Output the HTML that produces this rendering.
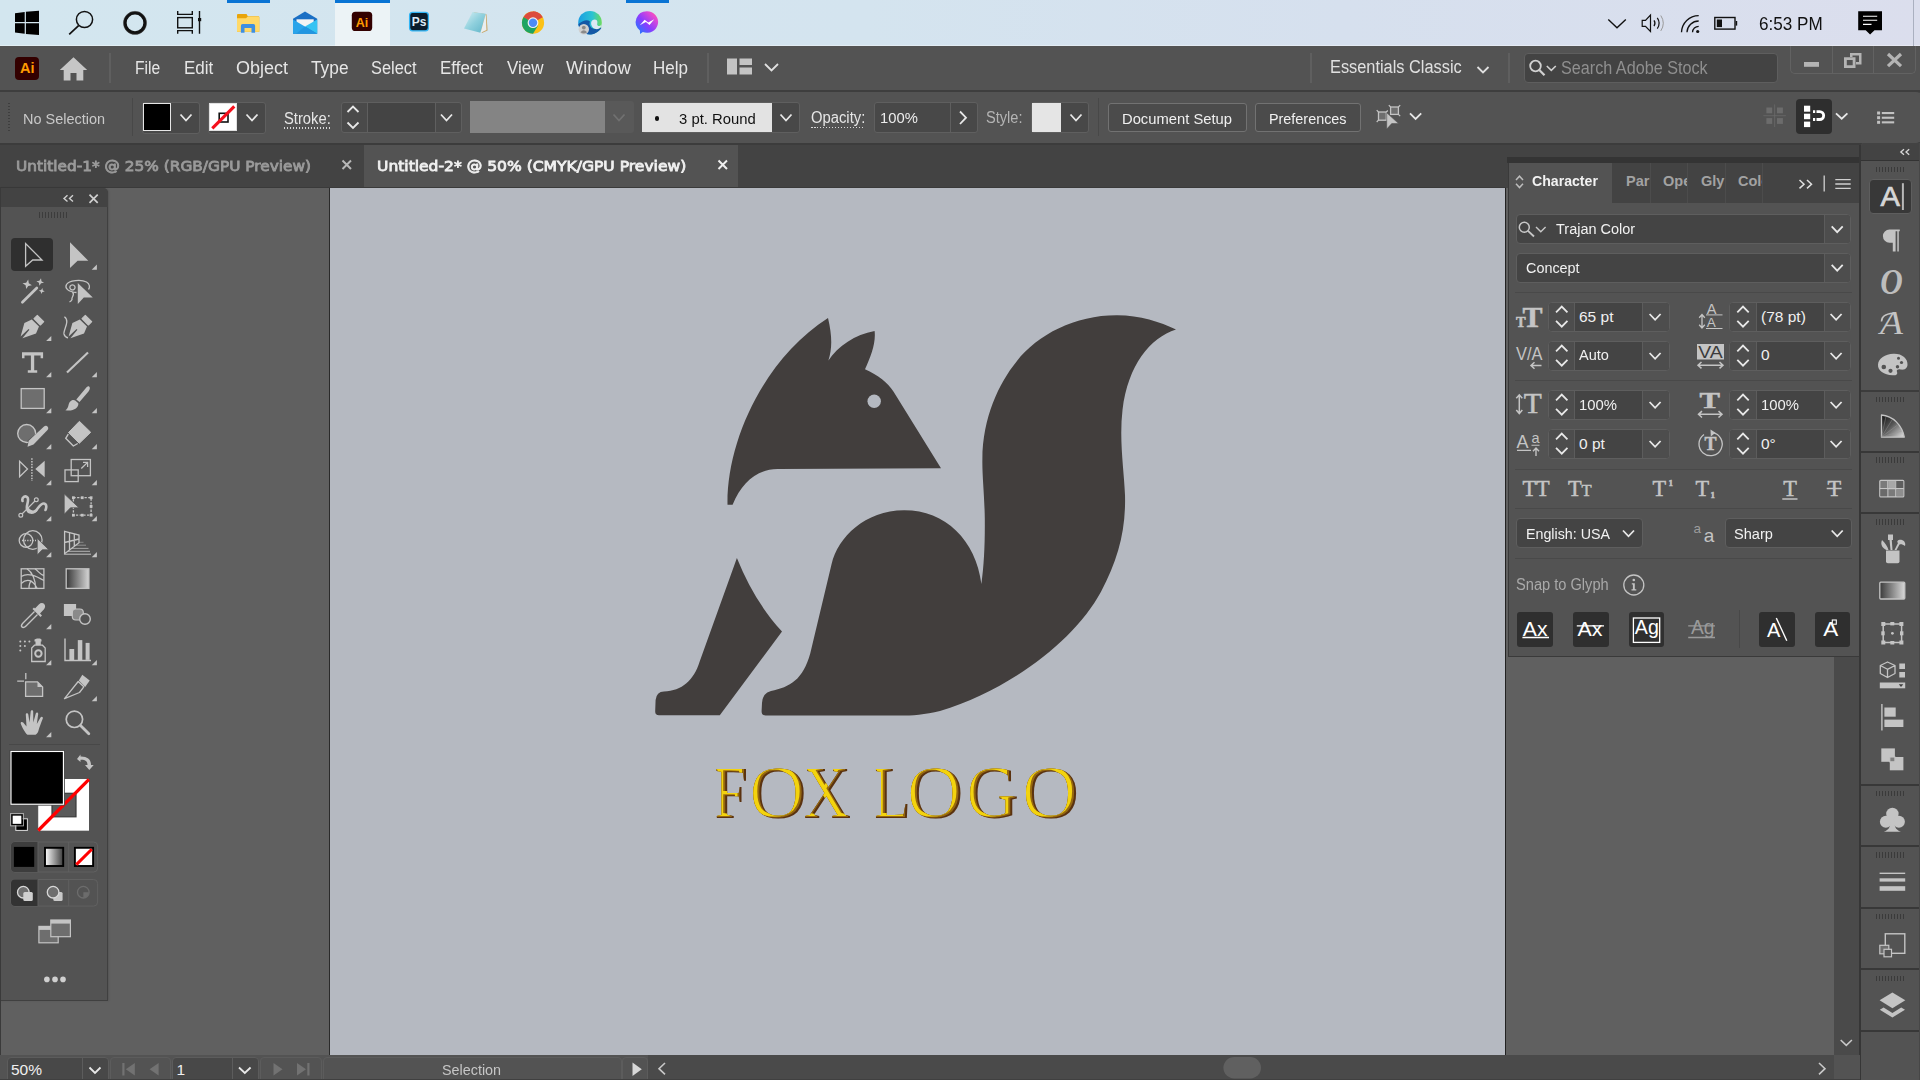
<!DOCTYPE html>
<html><head><meta charset="utf-8"><title>Adobe Illustrator</title>
<style>
*{box-sizing:border-box;margin:0;padding:0}
html,body{width:1920px;height:1080px;overflow:hidden;background:#535353;font-family:"Liberation Sans",sans-serif;color:#dcdcdc}
.a{position:absolute}
.t{position:absolute;white-space:nowrap;line-height:1}
svg{position:absolute;overflow:visible}
#taskbar{left:0;top:0;width:1920px;height:46px;background:#dce8f3}
#menubar{left:0;top:46px;width:1920px;height:45px;background:#535353}
#ctrl{left:0;top:91px;width:1920px;height:53px;background:#535353;border-top:2px solid #454545;border-bottom:2px solid #3f3f3f}
#tabs{left:0;top:144px;width:1920px;height:44px;background:#424242}
#paste{left:0;top:188px;width:1860px;height:868px;background:#606060}
#canvas{left:330px;top:188px;width:1175px;height:867px;background:#b5b9c1}
#status{left:0;top:1056px;width:1860px;height:24px;background:#4a4a4a}
.menu{top:58.500px;font-size:18px;color:#e6e6e6}
.cb{position:absolute;background:#484848;border:1px solid #5f5f5f;border-radius:3px}
</style></head><body>
<div class="a" id="taskbar"></div>
<div class="a" id="menubar"></div>
<div class="a" id="ctrl"></div>
<div class="a" id="tabs"></div>
<div class="a" id="paste"></div>
<div class="a" id="canvas"></div>
<div class="a" id="status"></div>

<div class="a" style="left:0;top:0;width:1920px;height:46px;background:linear-gradient(90deg,#d3e6ef 0%,#d4e4ef 45%,#d6e0ee 70%,#dbdeed 100%)"></div>
<div class="a" style="left:335px;top:0;width:55px;height:46px;background:#ecf3f6"></div><div class="a" style="left:0;top:45px;width:1920px;height:1px;background:rgba(255,255,255,.35)"></div>
<div class="a" style="left:227px;top:0;width:43px;height:3px;background:#0a74d4"></div>
<div class="a" style="left:335px;top:0;width:55px;height:3px;background:#0a74d4"></div>
<div class="a" style="left:626px;top:0;width:43px;height:3px;background:#0a74d4"></div>
<div class="a" style="left:1913px;top:0;width:1px;height:46px;background:#aab0c0"></div>
<svg width="1920" height="46" viewBox="0 0 1920 46" style="left:0;top:0">
<!-- windows -->
<path d="M15 13.2 L24.7 11.9 V22 H15Z M25.9 11.7 L39 10.7 V22 H25.9Z M15 23.2 H24.7 V33.8 L15 32.4Z M25.9 23.2 H39 V35 L25.9 33.9Z" fill="#000"/>
<!-- search -->
<circle cx="84.5" cy="19.5" r="8.1" fill="none" stroke="#111" stroke-width="1.5"/>
<path d="M78.6 25.6 L69.2 34.3" stroke="#111" stroke-width="1.7" fill="none"/>
<!-- cortana -->
<circle cx="135" cy="22.9" r="10" fill="none" stroke="#111" stroke-width="3.3"/>
<circle cx="135" cy="22.9" r="11.6" fill="none" stroke="#555" stroke-width="0.8" opacity=".5"/>
<!-- taskview -->
<g fill="none" stroke="#111" stroke-width="1.4">
<rect x="177.7" y="17.6" width="14.6" height="10.2"/>
<path d="M177.7 11 V14.4 H192.3 V11 M177.7 33.8 V30.6 H192.3 V33.8 M199.5 11 V33.8"/>
</g>
<rect x="198" y="18" width="3.2" height="3.2" fill="#111"/>
<!-- folder -->
<path d="M237 15 q0-1 1-1 h8.5 l1.3 2.2 h10.5 q1 0 1 1 v14.5 h-22.3z" fill="#e9a50a"/>
<path d="M237 18.2 l9-0 l1.8-1.8 h10.5 q1 0 1 1 v14.4 h-22.3z" fill="#ffd968"/>
<path d="M240.9 32.7 v-7 q0-1.6 1.6-1.6 h11 q1.6 0 1.6 1.6 v7 h-3.6 v-4.7 h-7 v4.700z" fill="#3f8fe0"/>
<!-- mail -->
<path d="M293 18.8 L305 11.5 L317.2 18.8 V33.8 H293Z" fill="#1a6fc4"/>
<path d="M296.5 19.3 H313.7 V27 H296.500Z" fill="#f4f4f4"/>
<path d="M293 19.5 L317.2 33.8 H293Z" fill="#29a4ea"/>
<path d="M317.2 19.5 V33.8 L305 26.6Z" fill="#35c3f3"/>
<path d="M305 26.6 L317.2 33.8 H296Z" fill="#1d8bd8" opacity=".55"/>
<!-- Ai -->
<rect x="351.8" y="11.7" width="20.4" height="19.4" rx="3.6" fill="#330000"/>
<text x="362" y="26.6" font-family="Liberation Sans,sans-serif" font-weight="700" font-size="12.5" fill="#ff9a00" text-anchor="middle">Ai</text>
<!-- Ps -->
<rect x="409.6" y="12.4" width="18.8" height="18.4" rx="3" fill="#0b1c2c" stroke="#31b5f5" stroke-width="1.3"/>
<text x="419" y="26.3" font-family="Liberation Sans,sans-serif" font-weight="700" font-size="12" fill="#dcebf7" text-anchor="middle">Ps</text>
<!-- notepad -->
<defs>
<linearGradient id="np" x1="0" y1="0" x2="1" y2="1"><stop offset="0" stop-color="#d8f0f4"/><stop offset=".5" stop-color="#8fd0dd"/><stop offset="1" stop-color="#5fb4c8"/></linearGradient>
<linearGradient id="ms" x1="0" y1="1" x2="1" y2="0"><stop offset="0" stop-color="#0a86ff"/><stop offset=".45" stop-color="#8a3dff"/><stop offset=".8" stop-color="#e84ad0"/><stop offset="1" stop-color="#ff6a6a"/></linearGradient>
<linearGradient id="ed" x1="0" y1="0" x2="1" y2="0"><stop offset="0" stop-color="#1b9de2"/><stop offset=".6" stop-color="#2cc3d2"/><stop offset="1" stop-color="#6ddc5c"/></linearGradient>
</defs>
<path d="M473.500 12.3 L486.5 14.2 L487.6 30.500 L482 33 Z" fill="#c9a86a"/>
<path d="M472.500 12 L485.800 13.8 L480.500 32.8 L464 28.5Z" fill="url(#np)"/>
<path d="M485.800 13.8 L486.400 30 L480.500 32.8Z" fill="#e9eef0"/>
<!-- chrome -->
<circle cx="533" cy="22.700" r="11.100" fill="#fbc116"/>
<path d="M533 22.700 L523.400 17.150 A11.100 11.100 0 0 1 542.600 17.150Z" fill="#dc4b3e"/>
<path d="M533 11.600 A11.100 11.100 0 0 1 542.600 17.150 L533 17.150Z" fill="#dc4b3e"/>
<path d="M523.400 17.150 A11.100 11.100 0 0 0 533 33.800 L538 25.500 L533 22.700Z" fill="#1da462"/>
<path d="M523.400 17.150 L528.200 25.500 L533 22.700Z" fill="#1da462"/>
<circle cx="533" cy="22.700" r="5.400" fill="#f1f1f1"/>
<circle cx="533" cy="22.700" r="4.200" fill="#4c8bf5"/>
<!-- edge -->
<circle cx="590" cy="22.700" r="11.800" fill="url(#ed)"/>
<path d="M578.300 24 A11.800 11.800 0 0 0 597 32.200 Q601 29.500 601.500 27.500 Q596 30.500 591.500 27.800 Q588.500 25 590 21.500 Q586 18 578.300 24Z" fill="#1458a6"/>
<path d="M590 21.500 Q591.500 18.500 595 19.300 Q598.500 20.500 597 24.500 Q595.500 27.200 601.600 25 Q602.200 21 600 18 Q595 13 588 15.500 Q582 18 580.500 23 Q585 18.500 590 21.500Z" fill="#dce8f3" opacity="0"/>
<path d="M591.200 24.500 Q590.500 20 594.500 19.500 Q598 19.800 597.300 23.200 Q596.500 26 599.500 26 Q601.500 25.500 601.700 24 Q601.500 28 597 29.200 Q592.500 29 591.200 24.500Z" fill="#dce8f3"/>
<circle cx="583.800" cy="29.300" r="5.200" fill="#d0d0d0"/>
<circle cx="583.800" cy="27.600" r="1.900" fill="#8a8a8a"/>
<path d="M580.500 32.300 q3.300-4.200 6.600 0 q-3.300 2.600-6.600 0z" fill="#8a8a8a"/>
<!-- messenger -->
<path d="M647 11.200 a11.100 10.800 0 1 1-4.200 20.800 l-2.700 2 l-.2-3.600 A11.100 10.800 0 0 1 647 11.200z" fill="url(#ms)"/>
<path d="M639.800 25.300 L644.600 19.700 L648.200 22.500 L654.300 19.300 L649.500 24.900 L645.900 22.100Z" fill="#fff"/>
<!-- tray -->
<g fill="none" stroke="#111" stroke-width="1.4">
<path d="M1608.300 19.600 L1617 27.800 L1625.800 19.600"/>
<path d="M1642.200 20.300 H1645.500 L1650.500 15 V31.500 L1645.500 26.300 H1642.200Z" stroke-width="1.200"/>
<path d="M1654 20.300 q2 2.900 0 5.800 M1657.300 17.800 q3.700 5.400 0 10.800" stroke-width="1.200"/>
<path d="M1660.800 15.500 q5 7.700 0 15.400" stroke-width="1" stroke="#999"/>
<path d="M1681.500 32.300 A17.200 17.200 0 0 1 1698.700 15.600 M1687 32.300 A11.700 11.700 0 0 1 1698.700 21 M1692.500 32.300 A6.200 6.200 0 0 1 1698.700 26.300" stroke-width="1.300"/>
<rect x="1714.800" y="17.500" width="20.200" height="11.600" stroke-width="1.400"/>
</g>
<circle cx="1697.700" cy="31.500" r="1.600" fill="#111"/>
<rect x="1716.800" y="19.500" width="5.200" height="7.600" fill="#111"/>
<rect x="1735.700" y="21" width="1.500" height="4.600" fill="#111"/>
<path d="M1858.200 11.200 H1882 V30.300 H1874.500 L1870.100 34.500 L1865.700 30.300 H1858.200Z" fill="#000"/>
<path d="M1863 16.200 H1877.200 M1863 20.300 H1877.200 M1863 24.400 H1871.500" stroke="#fff" stroke-width="1.100" fill="none"/>
</svg>
<div class="t" id="time" style="left:1759.300px;top:15.300px;font-size:18.500px;color:#111;transform:scaleX(0.9244);transform-origin:0 0">6:53 PM</div>


<div class="a" style="left:0;top:90px;width:1920px;height:2px;background:#3e3e3e"></div>
<div class="a" style="left:15px;top:57px;width:24px;height:23px;border-radius:4px;background:#330000"></div>
<div class="t" style="left:20px;top:61px;font-size:14.500px;font-weight:700;color:#ff9a00">Ai</div>
<svg width="30" height="26" viewBox="0 0 30 26" style="left:59px;top:56px"><path d="M14.500 1.200 L28.200 14 H24.300 V24.500 H17.500 V17 H11.500 V24.500 H4.700 V14 H0.800Z" fill="#c6c6c6"/></svg>
<div class="a" style="left:109px;top:53px;width:2px;height:30px;background:#5f5f5f"></div>
<div class="t menu" id="m1" style="left:134.500px;transform:scaleX(0.8685);transform-origin:0 0">File</div>
<div class="t menu" id="m2" style="left:183.500px;transform:scaleX(0.9442);transform-origin:0 0">Edit</div>
<div class="t menu" id="m3" style="left:236px;transform:scaleX(0.9994);transform-origin:0 0">Object</div>
<div class="t menu" id="m4" style="left:311px;transform:scaleX(0.9608);transform-origin:0 0">Type</div>
<div class="t menu" id="m5" style="left:371px;transform:scaleX(0.9094);transform-origin:0 0">Select</div>
<div class="t menu" id="m6" style="left:440px;transform:scaleX(0.9409);transform-origin:0 0">Effect</div>
<div class="t menu" id="m7" style="left:507px;transform:scaleX(0.9431);transform-origin:0 0">View</div>
<div class="t menu" id="m8" style="left:566px;transform:scaleX(1.0120);transform-origin:0 0">Window</div>
<div class="t menu" id="m9" style="left:653px;transform:scaleX(0.9451);transform-origin:0 0">Help</div>
<div class="a" style="left:707px;top:53px;width:2px;height:30px;background:#5f5f5f"></div>
<svg width="60" height="20" viewBox="0 0 60 20" style="left:726px;top:57px"><path d="M1 1.500 H11 V17.500 H1Z M13.500 1.500 H26 V8 H13.500Z M13.500 10.500 H26 V17.500 H13.500Z" fill="#c4c4c4"/><path d="M39 7 l6.5 6.5 l6.5 -6.5" fill="none" stroke="#e0e0e0" stroke-width="1.8"/></svg>
<div class="a" style="left:1310px;top:53px;width:2px;height:30px;background:#5f5f5f"></div>
<div class="t" id="ess" style="left:1330px;top:58px;font-size:18px;color:#e0e0e0;transform:scaleX(0.9080);transform-origin:0 0">Essentials Classic</div>
<svg width="14" height="10" viewBox="0 0 14 10" style="left:1476px;top:65px"><path d="M1.5 2 l5.5 5.5 l5.5 -5.5" fill="none" stroke="#e0e0e0" stroke-width="1.8"/></svg>
<div class="a" style="left:1508px;top:53px;width:2px;height:30px;background:#5f5f5f"></div>
<div class="a" style="left:1524px;top:52.500px;width:254px;height:30px;border-radius:4px;background:#434343;border:1px solid #5e5e5e"></div>
<svg width="30" height="20" viewBox="0 0 30 20" style="left:1528px;top:58px"><circle cx="7.500" cy="8" r="5.300" fill="none" stroke="#d0d0d0" stroke-width="1.800"/><path d="M11.300 12 L16.500 17.300" stroke="#d0d0d0" stroke-width="2.200"/><path d="M18.800 8 l4.500 4.300 l4.500-4.300" fill="none" stroke="#d0d0d0" stroke-width="1.600"/></svg>
<div class="t" id="sas" style="left:1561px;top:60px;font-size:17.500px;color:#8f8f8f;transform:scaleX(0.9245);transform-origin:0 0">Search Adobe Stock</div>
<div class="a" style="left:1790px;top:46px;width:125.500px;height:28px;border:1px solid #626262;border-top:none;border-radius:0 0 5px 5px"></div>
<div class="a" style="left:1832px;top:46px;width:1px;height:28px;background:#626262"></div>
<div class="a" style="left:1873px;top:46px;width:1px;height:28px;background:#626262"></div>
<svg width="126" height="28" viewBox="0 0 126 28" style="left:1790px;top:46px"><rect x="14" y="16" width="15" height="4.800" fill="#b4b4b4"/>
<path d="M60 7 H71.500 V18.500 H66 V16 H69 V9.500 H62.500 V11 H60Z" fill="#b4b4b4"/><path d="M54 11.200 H65.500 V22 H54Z M56.800 14 V19.300 H62.700 V14Z" fill="#b4b4b4" fill-rule="evenodd"/>
<path d="M98 8 L111 20.200 M111 8 L98 20.200" stroke="#b4b4b4" stroke-width="3.200"/></svg>


<div class="a" style="left:0;top:92px;width:1920px;height:51px;background:#535353;border-radius:0 4px 4px 0"></div>
<div class="a" style="left:0;top:143px;width:1920px;height:2px;background:#3c3c3c"></div>
<div class="a" style="left:8px;top:103px;width:2px;height:29px;background:repeating-linear-gradient(180deg,#3e3e3e 0 1px,transparent 1px 3px)"></div>
<div class="t" id="nosel" style="left:22.500px;top:110.500px;font-size:15.500px;color:#c9c9c9;transform:scaleX(0.9330);transform-origin:0 0">No Selection</div>
<div class="a" style="left:132px;top:98px;width:1px;height:38px;background:#484848"></div>
<div class="cb" style="left:142px;top:101.500px;width:57.500px;height:32px"></div>
<div class="a" style="left:143.200px;top:103px;width:27.800px;height:28.300px;background:#000;border:1.800px solid #e6e6e6"></div>
<div class="cb" style="left:208px;top:101.500px;width:57.500px;height:32px"></div>
<div class="a" style="left:209px;top:103px;width:28px;height:28.300px;background:#fff;border:1px solid #e0e0e0"></div>
<svg width="30" height="30" viewBox="0 0 30 30" style="left:209px;top:103px"><rect x="10.200" y="10.300" width="8.800" height="8.700" fill="none" stroke="#111" stroke-width="1.600"/><path d="M3.300 25.300 L25.300 3.300" stroke="#f5101c" stroke-width="3.100"/></svg>
<svg width="300" height="40" viewBox="0 0 300 40" style="left:170px;top:100px"><path d="M10.5 14.5 l5.5 6 l5.5 -6" fill="none" stroke="#e8e8e8" stroke-width="1.8"/><path d="M76.5 14.5 l5.5 6 l5.5 -6" fill="none" stroke="#e8e8e8" stroke-width="1.8"/></svg>
<div class="t" id="stroke" style="left:283.500px;top:110.500px;font-size:16px;color:#e6e6e6;transform:scaleX(0.9223);transform-origin:0 0">Stroke:</div>
<div class="a" style="left:284px;top:127px;width:46.500px;height:1.500px;background:repeating-linear-gradient(90deg,#d8d8d8 0 1.500px,transparent 1.500px 3px)"></div>
<div class="cb" style="left:340.500px;top:102px;width:121px;height:31px;background:#4a4a4a"></div><div class="a" style="left:368px;top:103px;width:67px;height:29px;background:#444"></div>
<div class="a" style="left:367px;top:103px;width:1px;height:29px;background:#5f5f5f"></div>
<div class="a" style="left:435px;top:103px;width:1px;height:29px;background:#5f5f5f"></div>
<svg width="130" height="40" viewBox="0 0 130 40" style="left:340px;top:100px"><path d="M7.5 12 l5.5 -5.5 l5.5 5.5" fill="none" stroke="#e8e8e8" stroke-width="1.8"/><path d="M7.5 22.5 l5.5 5.5 l5.5 -5.5" fill="none" stroke="#e8e8e8" stroke-width="1.8"/><path d="M101 14.5 l5.5 6 l5.5 -6" fill="none" stroke="#e8e8e8" stroke-width="1.8"/></svg>
<div class="a" style="left:470px;top:101px;width:135px;height:32px;background:#848484"></div>
<div class="a" style="left:605px;top:101px;width:29px;height:32px;background:#595959;border-radius:0 3px 3px 0"></div>
<svg width="20" height="12" viewBox="0 0 20 12" style="left:612px;top:112px"><path d="M1.5 2.5 l5.5 6 l5.5 -6" fill="none" stroke="#717171" stroke-width="1.8"/></svg>
<div class="cb" style="left:642px;top:102px;width:158px;height:31px"></div>
<div class="a" style="left:642px;top:103px;width:129.500px;height:29px;background:#e3e3e3"></div>
<div class="a" style="left:654.500px;top:116px;width:4.500px;height:4.500px;border-radius:50%;background:#111"></div>
<div class="t" id="ptr" style="left:678.500px;top:110.500px;font-size:15.500px;color:#111;transform:scaleX(0.9575);transform-origin:0 0">3 pt. Round</div>
<svg width="20" height="12" viewBox="0 0 20 12" style="left:778.500px;top:112px"><path d="M1.5 2.5 l5.5 6 l5.5 -6" fill="none" stroke="#e8e8e8" stroke-width="1.8"/></svg>
<div class="t" id="opac" style="left:810.500px;top:109.500px;font-size:16px;color:#e6e6e6;transform:scaleX(0.9244);transform-origin:0 0">Opacity:</div>
<div class="a" style="left:811px;top:126.500px;width:54px;height:1.500px;background:repeating-linear-gradient(90deg,#d8d8d8 0 1.500px,transparent 1.500px 3px)"></div>
<div class="cb" style="left:874px;top:102px;width:104px;height:31px"></div>
<div class="a" style="left:950px;top:103px;width:1px;height:29px;background:#5f5f5f"></div>
<div class="t" id="o100" style="left:879.500px;top:110px;font-size:15.500px;color:#ececec;transform:scaleX(0.9532);transform-origin:0 0">100%</div>
<svg width="12" height="16" viewBox="0 0 12 16" style="left:958px;top:110px"><path d="M2 1.500 L8 7.700 L2 14" fill="none" stroke="#e8e8e8" stroke-width="1.800"/></svg>
<div class="t" id="style" style="left:985.500px;top:109.500px;font-size:16px;color:#b4b4b4;transform:scaleX(0.9121);transform-origin:0 0">Style:</div>
<div class="cb" style="left:1031px;top:102px;width:58px;height:31px"></div>
<div class="a" style="left:1032px;top:103px;width:29px;height:29px;background:#e5e5e5"></div>
<svg width="20" height="12" viewBox="0 0 20 12" style="left:1068.500px;top:112px"><path d="M1.5 2.5 l5.5 6 l5.5 -6" fill="none" stroke="#e8e8e8" stroke-width="1.8"/></svg>
<div class="a" style="left:1098px;top:98px;width:1px;height:38px;background:#484848"></div>
<div class="a" style="left:1107.500px;top:103px;width:139.500px;height:28.500px;border:1px solid #727272;border-radius:3px;background:#4b4b4b"></div>
<div class="t" id="docs" style="left:1122px;top:110.500px;font-size:15.500px;color:#f0f0f0;transform:scaleX(0.9526);transform-origin:0 0">Document Setup</div>
<div class="a" style="left:1254.500px;top:103px;width:106.500px;height:28.500px;border:1px solid #727272;border-radius:3px;background:#4b4b4b"></div>
<div class="t" id="prefs" style="left:1268.500px;top:110.500px;font-size:15.500px;color:#f0f0f0;transform:scaleX(0.9273);transform-origin:0 0">Preferences</div>
<svg width="50" height="30" viewBox="0 0 50 30" style="left:1375px;top:102px">
<g fill="#6e6e6e" stroke="#c4c4c4" stroke-width="1.300"><rect x="3.500" y="10" width="7.800" height="8.200"/><rect x="15.600" y="5" width="7.800" height="7.400"/></g>
<path d="M3.500 10 l-1.800 -1.800 M3.500 18.200 l-1.800 1.800 M11.300 10 l1.500 -1.500 M15.600 5 l-1.800 -1.800 M23.400 5 l1.800 -1.800 M23.400 12.400 l1.800 1.800" stroke="#c4c4c4" stroke-width="1.200"/>
<path d="M11.700 10.700 V27.100 L16.700 21.600 H23.600Z" fill="#c4c4c4" stroke="#535353" stroke-width="0.600"/><path d="M35 11.300 l5.600 5.600 l5.600 -5.600" fill="none" stroke="#e8e8e8" stroke-width="1.800"/></svg>
<svg width="160" height="40" viewBox="1760 96 160 40" style="left:1760px;top:96px">
<g fill="#6c6c6c"><rect x="1766.400" y="107.500" width="5.800" height="5.800"/><rect x="1777" y="107.500" width="5.900" height="5.800"/><rect x="1766.400" y="118.100" width="5.800" height="5.800"/><rect x="1777" y="118.100" width="5.900" height="5.800"/><rect x="1774.100" y="104.400" width="1" height="22.600" opacity=".7"/><rect x="1763.300" y="115.200" width="22.600" height="1" opacity=".7"/></g>
<rect x="1796" y="99" width="36" height="35" rx="4" fill="#2e2e2e"/>
<g fill="#fff"><rect x="1804" y="105.700" width="6.200" height="6"/><rect x="1804" y="113.700" width="6.200" height="5.500"/><rect x="1804" y="121.600" width="6.200" height="5.500"/>
<path d="M1813 110.200 H1819.700 a5.400 5.400 0 0 1 0 10.800 H1813 V118.100 H1819.700 a2.500 2.500 0 0 0 0 -5 H1813Z"/></g>
<rect x="1815.200" y="109.500" width="1.300" height="12" fill="#2e2e2e"/>
<path d="M1836 113.300 l5.700 5.400 l5.700 -5.400" fill="none" stroke="#e8e8e8" stroke-width="1.800"/>
<g fill="#c2c2c2"><rect x="1877.100" y="111.500" width="3" height="3"/><rect x="1877.100" y="116.200" width="3" height="3"/><rect x="1877.100" y="120.800" width="3" height="3"/><rect x="1881.800" y="112" width="12.400" height="2.100"/><rect x="1881.800" y="116.700" width="12.400" height="2.100"/><rect x="1881.800" y="121.300" width="12.400" height="2.100"/></g>
</svg>


<div class="a" style="left:0;top:145px;width:1920px;height:43px;background:#434343"></div>
<div class="a" style="left:0;top:145px;width:362.500px;height:42px;background:#434343"></div>
<div class="a" style="left:363.500px;top:145px;width:374.500px;height:42px;background:#535353"></div>
<div class="a" style="left:0;top:186.500px;width:1506px;height:1.500px;background:#3a3a3a"></div>
<div class="t" id="tab1" style="left:16px;top:158.800px;font-family:'DejaVu Sans',sans-serif;font-weight:400;-webkit-text-stroke:0.800px;font-size:14px;color:#9a9a9a;transform:scaleX(1.0961);transform-origin:0 0">Untitled-1* @ 25% (RGB/GPU Preview)</div>
<div class="t" id="tab2" style="left:377px;top:158.800px;font-family:'DejaVu Sans',sans-serif;font-weight:400;-webkit-text-stroke:0.800px;font-size:14px;color:#f0f0f0;transform:scaleX(1.1103);transform-origin:0 0">Untitled-2* @ 50% (CMYK/GPU Preview)</div>
<svg width="12" height="12" viewBox="0 0 12 12" style="left:341px;top:159px"><path d="M1.500 1.500 L10 10 M10 1.500 L1.500 10" stroke="#b8b8b8" stroke-width="2"/></svg>
<svg width="12" height="12" viewBox="0 0 12 12" style="left:716.500px;top:159px"><path d="M1.500 1.500 L10 10 M10 1.500 L1.500 10" stroke="#f0f0f0" stroke-width="2"/></svg>


<div class="a" style="left:0;top:188px;width:108px;height:813px;background:#535353;border-radius:0 5px 0 0;border-right:1px solid #404040;border-bottom:1px solid #404040;box-shadow:1px 0 2px rgba(0,0,0,.12)"></div>
<div class="a" style="left:0;top:188px;width:107.500px;height:19px;background:#434343;border-radius:0 5px 0 0"></div>
<div class="a" style="left:0;top:188px;width:1px;height:892px;background:#3a3a3a"></div>
<div class="a" style="left:39px;top:212px;width:29px;height:6px;background:repeating-linear-gradient(90deg,#3c3c3c 0 1px,transparent 1px 3px)"></div>
<div class="a" style="left:11px;top:238px;width:42px;height:33px;border-radius:4px;background:#2f2f2f"></div>
<div class="a" style="left:9px;top:744px;width:91px;height:1px;background:#484848"></div>
<svg width="110" height="812" viewBox="0 188 110 812" style="left:0;top:188px">
<path d="M67.500 195.200 L64 198.400 L67.500 201.600 M73 195.200 L69.500 198.400 L73 201.600" fill="none" stroke="#d0d0d0" stroke-width="1.400"/>
<path d="M89.500 194.600 L97.700 202.800 M97.700 194.600 L89.500 202.800" stroke="#d0d0d0" stroke-width="1.700"/>
<!-- selection -->
<path d="M25.600 243.500 V266.300 L32.700 260 H42 Z" fill="none" stroke="#c4c4c4" stroke-width="1.300" stroke-linejoin="miter"/>
<path d="M70 242.300 V268 L77.600 260.700 H88.300Z" fill="#c4c4c4"/><path d="M96.9 269.8 L96.9 264.6 L91.7 269.8Z" fill="#c4c4c4"/>
<!-- wand -->
<path d="M22.400 302.200 L36.800 288" stroke="#c4c4c4" stroke-width="2.700" stroke-linecap="round"/>
<path d="M27.2 279.5 L28.544 282.956 L32.0 284.3 L28.544 285.644 L27.2 289.1 L25.855999999999998 285.644 L22.4 284.3 L25.855999999999998 282.956Z" fill="#c4c4c4" transform="rotate(12 27.2 284.3)"/><path d="M40.2 278.1 L41.292 280.908 L44.1 282 L41.292 283.092 L40.2 285.9 L39.108000000000004 283.092 L36.300000000000004 282 L39.108000000000004 280.908Z" fill="#c4c4c4" transform="rotate(12 40.2 282)"/><path d="M41.8 288 L42.64 290.16 L44.8 291 L42.64 291.84 L41.8 294 L40.959999999999994 291.84 L38.8 291 L40.959999999999994 290.16Z" fill="#c4c4c4" transform="rotate(12 41.8 291)"/>
<!-- lasso -->
<path d="M77.800 283.100 V303.900 L83.800 297.500 H92.800Z" fill="#c4c4c4"/>
<path d="M76.500 292.500 C68 292 64.500 288 66.500 284.500 C69 280.300 81 279 86.500 282 C90 284 90 287.500 88.500 289.500" fill="none" stroke="#c4c4c4" stroke-width="1.300"/>
<path d="M72.500 290 a2.600 2.600 0 1 0 -0.100 0 M72.500 292 c3 3 -1.500 5 -0.500 7.500 c-0.500 1.500 -1.500 2 -2.500 2.500" fill="none" stroke="#c4c4c4" stroke-width="1.300"/>
<!-- pen -->
<g transform="translate(0,0)"><path d="M20.600 336.600 L24.400 323 L31.800 319.600 L39 326.600 L36 333.400 L22.400 338.200 L29.400 329.800 L28.600 329Z" fill="#c4c4c4"/>
<path d="M34 318.700 L37.300 315.400 L43.700 321.700 L40.400 325Z" fill="#c4c4c4" stroke="#c4c4c4" stroke-width="1.100" stroke-linejoin="round"/></g><path d="M51.3 341.1 L51.3 335.90000000000003 L46.099999999999994 341.1Z" fill="#c4c4c4"/>
<g transform="translate(48,0)"><path d="M20.600 336.600 L24.400 323 L31.800 319.600 L39 326.600 L36 333.400 L22.400 338.200 L29.400 329.800 L28.600 329Z" fill="#c4c4c4"/>
<path d="M34 318.700 L37.300 315.400 L43.700 321.700 L40.400 325Z" fill="#c4c4c4" stroke="#c4c4c4" stroke-width="1.100" stroke-linejoin="round"/></g>
<path d="M64.400 316.700 C70.500 321 63 330 64 334 C65 337.500 67 337.600 68 337.800" fill="none" stroke="#c4c4c4" stroke-width="1.300"/>
<!-- type -->
<path d="M22 352.200 H43.100 V358.300 H40.600 V355.400 H34.200 V370.200 H37.200 V372.800 H27.800 V370.200 H30.900 V355.400 H24.500 V358.300 H22Z" fill="#c4c4c4"/><path d="M51.3 377.2 L51.3 372.0 L46.099999999999994 377.2Z" fill="#c4c4c4"/>
<path d="M67 372.400 L88 352.400" stroke="#c4c4c4" stroke-width="2.100"/><path d="M96.9 377.2 L96.9 372.0 L91.7 377.2Z" fill="#c4c4c4"/>
<!-- rect -->
<rect x="21.200" y="388.600" width="23" height="19.800" fill="#6e6e6e" stroke="#c4c4c4" stroke-width="1.300"/><path d="M51.3 413.3 L51.3 408.1 L46.099999999999994 413.3Z" fill="#c4c4c4"/>
<!-- brush -->
<path d="M88.900 386.300 C90.500 387.500 90 389.500 88.500 391.500 L79.500 402 L76.300 399.400 L85.500 388.500 C87 386.700 88 385.800 88.900 386.300Z" fill="#c4c4c4"/>
<path d="M75.200 400.500 L78.300 403.200 C79 408 73 411.500 65.400 410.200 C69.500 408 67.500 402.500 71.500 400.500 C73 399.800 74.200 399.900 75.200 400.500Z" fill="#c4c4c4"/><path d="M96.9 413.3 L96.9 408.1 L91.7 413.3Z" fill="#c4c4c4"/>
<!-- shaper -->
<circle cx="26.700" cy="433.500" r="9" fill="#6e6e6e" stroke="#c4c4c4" stroke-width="1.400"/>
<path d="M27 441 L45 426.500 L49.500 431 L33 447.500Z" fill="#535353"/>
<path d="M46.800 426 C48.300 427 48.800 428.500 47.500 430 L33.500 444.500 L27.500 446.800 L28.700 440.800 L44 426.400 C45 425.500 46 425.500 46.800 426Z" fill="#c4c4c4"/><path d="M51.3 449.3 L51.3 444.1 L46.099999999999994 449.3Z" fill="#c4c4c4"/>
<!-- eraser -->
<path d="M79.400 421.300 L90.700 432.300 L79.300 443.300 L68.500 432.600Z" fill="#c4c4c4" stroke="#c4c4c4" stroke-width="1" stroke-linejoin="round"/>
<path d="M68.300 434.200 L65.700 438.300 L73.400 446 L77.700 443.500" fill="none" stroke="#c4c4c4" stroke-width="1.400" stroke-linejoin="round"/><path d="M96.9 449.3 L96.9 444.1 L91.7 449.3Z" fill="#c4c4c4"/>
<!-- reflect -->
<path d="M19.600 461.300 V476.700 L27.500 469Z" fill="none" stroke="#c4c4c4" stroke-width="1.300"/>
<path d="M44.700 460.800 V477.200 L35.300 469Z" fill="#c4c4c4"/>
<path d="M31.900 458.200 V481" stroke="#c4c4c4" stroke-width="1.500" stroke-dasharray="1.500 1.300"/><path d="M51.3 485.2 L51.3 480.0 L46.099999999999994 485.2Z" fill="#c4c4c4"/>
<!-- scale -->
<g fill="none" stroke="#c4c4c4" stroke-width="1.300"><rect x="71.200" y="459.500" width="19.200" height="16.200"/><rect x="65" y="469.900" width="13.200" height="11.700"/><path d="M81.300 468.500 L87.300 462.600 M83 462.300 H87.600 V467"/></g><path d="M96.9 485.2 L96.9 480.0 L91.7 485.2Z" fill="#c4c4c4"/>
<!-- width/warp -->
<path d="M22.500 501 C21.500 497 25.500 495 27.500 497.500 C29.500 500.500 26 505 27 509 C28.500 513.500 33 513.500 36 510.500 C39 507 41 503 44 503.500 C47 504 46.500 508 45.500 510" fill="none" stroke="#c4c4c4" stroke-width="2.600" stroke-linecap="round"/>
<path d="M27 510 C30 515 36 514 38 510 C33 512 30 510 27 506Z" fill="#c4c4c4"/>
<path d="M21.500 514.500 L35.500 500.500" stroke="#c4c4c4" stroke-width="1.200"/>
<circle cx="20.800" cy="515.200" r="1.900" fill="#535353" stroke="#c4c4c4" stroke-width="1.200"/><circle cx="36.300" cy="499.700" r="1.900" fill="#535353" stroke="#c4c4c4" stroke-width="1.200"/><path d="M51.3 521.3 L51.3 516.0999999999999 L46.099999999999994 521.3Z" fill="#c4c4c4"/>
<!-- free transform -->
<rect x="73.400" y="497.700" width="17.700" height="17.500" fill="none" stroke="#c4c4c4" stroke-width="1.300" stroke-dasharray="2.300 1.400"/>
<g fill="#c4c4c4"><rect x="72" y="496.300" width="2.800" height="2.800"/><rect x="89.700" y="496.300" width="2.800" height="2.800"/><rect x="72" y="513.800" width="2.800" height="2.800"/><rect x="89.700" y="513.800" width="2.800" height="2.800"/><rect x="80.800" y="496.300" width="2.800" height="2.800"/><rect x="80.800" y="513.800" width="2.800" height="2.800"/><rect x="89.700" y="505" width="2.800" height="2.800"/>
<path d="M64.200 493.800 V514.300 L70.500 507.800 H79Z" stroke="#535353" stroke-width="0.800"/></g><path d="M96.9 521.3 L96.9 516.0999999999999 L91.7 521.3Z" fill="#c4c4c4"/>
<!-- shape builder -->
<circle cx="26" cy="540.500" r="6.800" fill="none" stroke="#c4c4c4" stroke-width="1.300"/>
<circle cx="32.800" cy="540" r="9.300" fill="none" stroke="#c4c4c4" stroke-width="1.300"/>
<path d="M22 540.500 H36" stroke="#c4c4c4" stroke-width="1.400" stroke-dasharray="1.300 1.300"/>
<path d="M37.200 538.300 V555 L42.300 549.800 H48.800Z" fill="#c4c4c4" stroke="#535353" stroke-width="0.800"/><path d="M51.3 557.3 L51.3 552.0999999999999 L46.099999999999994 557.3Z" fill="#c4c4c4"/>
<!-- perspective -->
<g fill="none" stroke="#c4c4c4" stroke-width="1.300"><path d="M64.600 531.300 L79 535 V542.800 L64.600 553.700Z M64.600 542.500 L79 539 M69.500 532.500 V550 M74.300 533.800 V546.400"/></g>
<g stroke="#c4c4c4" stroke-width="1"><path d="M79 542.300 H83.500" opacity=".45"/><path d="M75.500 545.200 H86" opacity=".55"/><path d="M71.500 548.400 H88.500" opacity=".7"/><path d="M67.500 551.300 H90" opacity=".85"/><path d="M64.600 554.200 H91"/></g><path d="M96.9 557.3 L96.9 552.0999999999999 L91.7 557.3Z" fill="#c4c4c4"/>
<!-- mesh -->
<g fill="none" stroke="#c4c4c4" stroke-width="1.300"><rect x="21.200" y="568.800" width="22.700" height="19.600"/><path d="M21.200 576.500 C28 572 36 576 43.900 580.500 M21.200 583.500 C27 578 33 580 37 588.400 M27 568.800 C32 572 36 580 35.500 588.400 M35 568.800 C39 572 41 575 43.900 575.500 M29 588.400 C29 584 30 582 31.500 580.500"/></g>
<!-- gradient -->
<defs><linearGradient id="tg" x1="0" y1="0" x2="1" y2="0"><stop offset="0" stop-color="#383838"/><stop offset="1" stop-color="#d4d4d4"/></linearGradient></defs>
<rect x="66.200" y="568.800" width="22.700" height="19.600" fill="url(#tg)" stroke="#c4c4c4" stroke-width="1.300"/>
<!-- eyedropper -->
<path d="M34.500 611.500 L23 623 C21.500 624.500 21 626 22 627 C23 628 24.500 627.500 26 626 L37.500 614.500" fill="none" stroke="#c4c4c4" stroke-width="1.400" stroke-linejoin="round"/>
<path d="M32.500 609 L40.500 617 L42 615.500 L40 613.500 L43.800 609.500 C45.500 607.500 45.500 605.300 44.200 604 C42.800 602.700 40.600 602.800 38.800 604.500 L35 608.500 L34 607.500Z" fill="#c4c4c4"/><path d="M51.3 629.3 L51.3 624.0999999999999 L46.099999999999994 629.3Z" fill="#c4c4c4"/>
<!-- blend -->
<rect x="63.900" y="604" width="12.200" height="12" fill="#c4c4c4"/>
<rect x="72.300" y="609" width="11" height="11" rx="3.500" fill="#8a8a8a" stroke="#c4c4c4" stroke-width="1.200"/>
<circle cx="85" cy="619" r="5.300" fill="#535353" stroke="#c4c4c4" stroke-width="1.400"/>
<!-- sprayer -->
<g fill="none" stroke="#c4c4c4" stroke-width="1.300"><path d="M31.700 661.500 V648 L34.500 645.200 H42.500 L45.200 648 V661.500Z"/><circle cx="38.400" cy="653.500" r="3.200" stroke-width="2"/></g>
<path d="M35.500 645 V641.500 H34.500 V639.500 L37 638.500 H40 L41.500 639.500 V641.500 H40.800 V645Z" fill="#c4c4c4"/>
<g fill="#c4c4c4"><circle cx="20.300" cy="641.500" r="1"/><circle cx="24.900" cy="641.500" r="1"/><circle cx="29.400" cy="641.500" r="1"/><circle cx="20.300" cy="646" r="1"/><circle cx="24.900" cy="646" r="1"/><circle cx="20.300" cy="650.500" r="1"/></g><path d="M51.3 665.3 L51.3 660.0999999999999 L46.099999999999994 665.3Z" fill="#c4c4c4"/>
<!-- graph -->
<path d="M65 638.400 V660.500 H91" fill="none" stroke="#c4c4c4" stroke-width="1.400"/>
<g fill="#c4c4c4"><rect x="69.400" y="649" width="4.800" height="11"/><rect x="77.800" y="640.100" width="4.500" height="20"/><rect x="85.600" y="642.900" width="4" height="17"/></g><path d="M96.9 665.3 L96.9 660.0999999999999 L91.7 665.3Z" fill="#c4c4c4"/>
<!-- artboard -->
<path d="M17.200 681.200 H24 M25.800 673.100 V679.200" stroke="#c4c4c4" stroke-width="1.300"/>
<path d="M25.600 681.800 H37.500 L42.600 687 V696.300 H25.600Z" fill="#6e6e6e" stroke="#c4c4c4" stroke-width="1.300"/>
<path d="M37.500 681.800 V687 H42.600Z" fill="#c4c4c4"/>
<!-- slice -->
<path d="M64.500 698.700 L78.200 681.500 L83.800 686.800 L79.500 692.500Z" fill="none" stroke="#c4c4c4" stroke-width="1.300" stroke-linejoin="round"/>
<path d="M78.800 680.500 L82.300 674.800 L89.700 680.500 L85.200 687Z" fill="#c4c4c4"/><path d="M96.9 701.3 L96.9 696.0999999999999 L91.7 701.3Z" fill="#c4c4c4"/>
<!-- hand -->
<path d="M27.500 734.800 C25 733 22 727 20.700 723.500 C20.300 722 22 721.300 23.200 722.500 L26.500 726.500 L25.800 714.500 C25.800 712.800 28 712.800 28.300 714.500 L29.500 722.500 L30.700 711.500 C30.900 709.800 33.200 709.900 33.200 711.500 L33.300 722.500 L35.800 713.500 C36.300 711.800 38.400 712.300 38.200 714 L36.800 724 L40.500 717.500 C41.400 716 43.400 717 42.800 718.500 C41 723 39.500 727 38.500 730.500 C38 732.500 37 734 35.500 734.800Z" fill="#c4c4c4"/><path d="M51.3 737.3 L51.3 732.0999999999999 L46.099999999999994 737.3Z" fill="#c4c4c4"/>
<!-- zoom -->
<circle cx="74.400" cy="719.300" r="8.200" fill="none" stroke="#c4c4c4" stroke-width="1.700"/>
<path d="M80.500 725.500 L88.800 733.800" stroke="#c4c4c4" stroke-width="2.800" stroke-linecap="round"/>
<!-- swatches -->
<rect x="37.800" y="778.600" width="51.600" height="52.500" fill="#fff" stroke="#444" stroke-width="0.800"/>
<rect x="52" y="793.300" width="24" height="23.500" fill="#5a5a5a" stroke="#3a3a3a" stroke-width="1.200"/>
<path d="M38.200 830.500 L89 779.300" stroke="#ff0000" stroke-width="3.200"/>
<rect x="10.800" y="751.300" width="52.800" height="53.100" fill="#000" stroke="#fff" stroke-width="1.500"/>
<rect x="10" y="750.500" width="54.400" height="54.700" fill="none" stroke="#3f3f3f" stroke-width="0.800"/>
<path d="M80.500 754.500 L77 759 L80.500 762 V759.800 C86 759.500 87.500 762 87.500 765 H85 L89.300 770 L93.700 765 H91 C91 759.500 87.500 756.300 80.500 756.500Z" fill="#c4c4c4"/>
<rect x="15.800" y="818.800" width="11.600" height="11.600" fill="#000" stroke="#ddd" stroke-width="1"/>
<rect x="12" y="815" width="10" height="9.500" fill="#fff" stroke="#000" stroke-width="1.300"/>
<rect x="10.600" y="813.600" width="12.800" height="12.300" fill="none" stroke="#bbb" stroke-width="0.800"/>
<!-- color modes -->
<rect x="11" y="842" width="86.600" height="30" rx="4" fill="none" stroke="#616161" stroke-width="1"/>
<path d="M11 846 a4 4 0 0 1 4-4 H38 V872 H15 a4 4 0 0 1-4-4Z" fill="#3d3d3d"/>
<path d="M38 842 V872 M68.700 842 V872" stroke="#616161" stroke-width="1"/>
<rect x="13.900" y="846.900" width="20.300" height="20" fill="#000"/>
<defs><linearGradient id="gm" x1="0" y1="0" x2="1" y2="0"><stop offset="0" stop-color="#fff"/><stop offset="1" stop-color="#3c3c3c"/></linearGradient></defs>
<rect x="45" y="847.800" width="18.200" height="18.200" fill="url(#gm)" stroke="#000" stroke-width="1.900"/>
<rect x="74.900" y="847.800" width="18.200" height="18.200" fill="#fff" stroke="#000" stroke-width="1.900"/>
<path d="M76.300 864.600 L91.800 849.200" stroke="#ff0000" stroke-width="3"/>
<!-- draw modes -->
<rect x="11" y="879.500" width="86.600" height="26.600" rx="4" fill="none" stroke="#616161" stroke-width="1"/>
<path d="M11 883.500 a4 4 0 0 1 4-4 H38 V906.100 H15 a4 4 0 0 1-4-4Z" fill="#333"/>
<path d="M38 879.500 V906.100 M68.700 879.500 V906.100" stroke="#616161" stroke-width="1"/>
<circle cx="23.300" cy="892.200" r="5.800" fill="#6e6e6e" stroke="#d8d8d8" stroke-width="1.300"/><rect x="23.300" y="892" width="9.500" height="9.100" rx="1.500" fill="#d0d0d0"/>
<rect x="53.300" y="892" width="9.300" height="9.100" rx="1.500" fill="#c8c8c8"/><circle cx="53.100" cy="892.200" r="5.800" fill="#6e6e6e" stroke="#d8d8d8" stroke-width="1.300"/>
<circle cx="83.300" cy="892.200" r="5.800" fill="none" stroke="#6c6c6c" stroke-width="1.300"/><path d="M83.300 892.200 H89 A5.800 5.800 0 0 1 83.300 898Z" fill="#6c6c6c"/>
<!-- screen mode -->
<rect x="38.900" y="926.400" width="19.300" height="16.400" fill="#6e6e6e" stroke="#c4c4c4" stroke-width="1.200"/><rect x="38.900" y="926.400" width="19.300" height="3.500" fill="#c4c4c4"/>
<rect x="50.800" y="920" width="19.600" height="16.700" fill="#6e6e6e" stroke="#c4c4c4" stroke-width="1.200"/><rect x="50.800" y="920" width="19.600" height="3.600" fill="#c4c4c4"/>
<circle cx="46.900" cy="979.400" r="2.800" fill="#d0d0d0"/><circle cx="55" cy="979.400" r="2.800" fill="#d0d0d0"/><circle cx="63" cy="979.400" r="2.800" fill="#d0d0d0"/>
</svg>


<div class="a" style="left:329px;top:188px;width:1px;height:867px;background:#2a2a2a"></div>
<svg width="1175" height="868" viewBox="330 188 1175 868" style="left:330px;top:188px">
<g fill="#423e3d">
<path d="M727.500 504.800 C726.500 440 765 358 828 318 C832 335 832.500 348 828.400 360.500 C838 346 855 334.500 874.600 331 C876 343 871 356 865 369.300 C878 375 888 383 893.600 391.700 L941 468.300 L777.400 469 C757 469.500 742 482 732.600 504.800Z"/>
<path d="M736.900 557.900 C748 585 762 610 782 631.600 L719.800 715.200 L659 715.200 Q655 715.200 655.200 711 L655.600 700 Q656.500 691.600 664 691.500 C682 691 694 680 699.600 661.800Z"/>
<path d="M765.600 715.600 Q761.500 715.600 761.600 711 L762 703 Q762.500 693 771 691 C790 687 803 680 810.300 653.300 L831.600 563.900 C838 537 865 510.500 904 510.200 C945 510 976 540 981.400 584 C984 565 985 545 984.800 519 C984.500 495 982 475 982.400 459 C982.500 418 999 383 1016.400 361.700 C1038 334 1076 315 1117.300 315.300 C1140 315.500 1160 322 1176 329.500 C1150 338 1128 365 1122.500 410 C1119 440 1124 470 1125 495 C1126 530 1118 560 1101 591.700 C1075 640 1010 690 940 710.900 C925 714.500 912 715.600 900 715.600Z"/>
</g>
<circle cx="874.200" cy="401.300" r="6.700" fill="#b5b9c1"/>
<defs><filter id="goldf" x="-5%" y="-20%" width="110%" height="140%" color-interpolation-filters="sRGB">
<feOffset in="SourceAlpha" dx="-2.2" dy="-0.9" result="o1"/><feOffset in="SourceAlpha" dx="-3.8" dy="-1.7" result="o2"/>
<feComposite in="SourceAlpha" in2="o1" operator="in" result="m1"/><feComposite in="SourceAlpha" in2="o2" operator="in" result="m2"/>
<feFlood flood-color="#5a3210"/><feComposite in2="SourceAlpha" operator="in" result="c0"/>
<feFlood flood-color="#96680f"/><feComposite in2="m1" operator="in" result="c1"/>
<feFlood flood-color="#f3d30e"/><feComposite in2="m2" operator="in" result="c2"/>
<feMerge><feMergeNode in="c0"/><feMergeNode in="c1"/><feMergeNode in="c2"/></feMerge></filter></defs>
<g><title>FOX LOGO</title><text y="817.700" font-family="Liberation Serif,serif" font-size="75" fill="#f3d30e" filter="url(#goldf)"><tspan x="714.84" textLength="33.41" lengthAdjust="spacingAndGlyphs">F</tspan><tspan x="750.14" textLength="56.87" lengthAdjust="spacingAndGlyphs">O</tspan><tspan x="803.80" textLength="47.38" lengthAdjust="spacingAndGlyphs">X</tspan><tspan> </tspan><tspan x="874.23" textLength="36.77" lengthAdjust="spacingAndGlyphs">L</tspan><tspan x="907.80" textLength="55.86" lengthAdjust="spacingAndGlyphs">O</tspan><tspan x="967.23" textLength="51.82" lengthAdjust="spacingAndGlyphs">G</tspan><tspan x="1022.76" textLength="56.53" lengthAdjust="spacingAndGlyphs">O</tspan></text></g>
</svg>


<style>.cf{position:absolute;background:#444;border:1px solid #5e5e5e;border-radius:4px}</style>
<div class="a" style="left:1505px;top:188px;width:329px;height:867px;background:#606060;border-left:1px solid #222"></div>
<div class="a" style="left:1834px;top:188px;width:25px;height:867px;background:#4a4a4a"></div>
<div class="a" style="left:1507px;top:157px;width:353px;height:6px;background:#343434"></div>
<div class="a" style="left:1507.500px;top:162.500px;width:352px;height:494.500px;background:#535353;border-left:1px solid #3a3a3a;border-bottom:1.500px solid #3a3a3a"></div>
<div class="a" style="left:1612px;top:162.500px;width:247.500px;height:40.500px;background:#434343"></div>
<div class="a" style="left:1650px;top:163px;width:1px;height:40px;background:#4c4c4c"></div>
<div class="a" style="left:1687px;top:163px;width:1px;height:40px;background:#4c4c4c"></div>
<div class="a" style="left:1725px;top:163px;width:1px;height:40px;background:#4c4c4c"></div>
<div class="a" style="left:1762px;top:163px;width:1px;height:40px;background:#4c4c4c"></div>
<svg width="12" height="16" viewBox="0 0 12 16" style="left:1514px;top:174px"><path d="M2 6 L5.500 2.200 L9 6 M2 9.800 L5.500 13.600 L9 9.800" fill="none" stroke="#bdbdbd" stroke-width="1.500"/></svg>
<div class="t" id="chr" style="left:1531.500px;top:173.500px;font-size:14.500px;font-weight:700;color:#f2f2f2;transform:scaleX(0.9734);transform-origin:0 0">Character</div>
<div class="t ct" style="left:1626px;width:24px">Par</div>
<div class="t ct" style="left:1663px;width:24px">Ope</div>
<div class="t ct" style="left:1701px;width:24px">Gly</div>
<div class="t ct" style="left:1738px;width:24px">Colo</div>
<style>.ct{top:173.500px;font-size:14.500px;font-weight:700;color:#a2a2a2;overflow:hidden;height:18px}</style>
<svg width="60" height="20" viewBox="1796 172 60 20" style="left:1796px;top:172px"><path d="M1799.500 180 L1804 184.200 L1799.500 188.400 M1807 180 L1811.500 184.200 L1807 188.400" fill="none" stroke="#e0e0e0" stroke-width="1.500"/><path d="M1824.200 175.400 V191.400" stroke="#d0d0d0" stroke-width="1.300"/><path d="M1835.300 179.600 H1850.700 M1835.300 184 H1850.700 M1835.300 188.300 H1850.700" stroke="#d0d0d0" stroke-width="1.300"/></svg>
<div class="cf" style="left:1516px;top:213.500px;width:335px;height:30px"></div>
<div class="a" style="left:1823.500px;top:214.500px;width:1px;height:28px;background:#5c5c5c"></div>
<div class="a" style="left:1824.500px;top:214.500px;width:25.500px;height:28px;background:#4d4d4d;border-radius:0 3px 3px 0"></div>
<svg width="340" height="30" viewBox="1516 213.500 340 30" style="left:1516px;top:213.500px"><circle cx="1524.300" cy="226.700" r="5" fill="none" stroke="#c8c8c8" stroke-width="1.500"/><path d="M1528 230.300 L1534 236" stroke="#c8c8c8" stroke-width="1.800"/><path d="M1536 226.5 l4.8 4.8 l4.8 -4.8" fill="none" stroke="#c8c8c8" stroke-width="1.4"/><path d="M1831.7 225.8 l5.5 5.8 l5.5 -5.8" fill="none" stroke="#e8e8e8" stroke-width="1.8"/></svg>
<div class="t" id="trj" style="left:1556px;top:221px;font-size:15.500px;color:#f2f2f2;transform:scaleX(0.9349);transform-origin:0 0">Trajan Color</div>
<div class="cf" style="left:1516px;top:252.500px;width:335px;height:30px"></div>
<div class="a" style="left:1823.500px;top:253.500px;width:1px;height:28px;background:#5c5c5c"></div>
<div class="a" style="left:1824.500px;top:253.500px;width:25.500px;height:28px;background:#4d4d4d;border-radius:0 3px 3px 0"></div>
<svg width="20" height="12" viewBox="0 0 20 12" style="left:1830px;top:262px"><path d="M1.7 2.8 l5.5 5.8 l5.5 -5.8" fill="none" stroke="#e8e8e8" stroke-width="1.8"/></svg>
<div class="t" id="cnc" style="left:1525.500px;top:260px;font-size:15.500px;color:#f2f2f2;transform:scaleX(0.9284);transform-origin:0 0">Concept</div>
<div class="a sp" style="top:292px"></div><div class="a sp" style="top:380px"></div><div class="a sp" style="top:469px"></div><div class="a sp" style="top:508px"></div><div class="a sp" style="top:557.500px"></div>
<style>.sp{left:1515px;width:337px;height:1px;background:#494949}</style>
<div class="cf" style="left:1547.5px;top:302px;width:122px;height:30px"></div><div class="a" style="left:1574px;top:303px;width:1px;height:28px;background:#5c5c5c"></div><div class="a" style="left:1642px;top:303px;width:1px;height:28px;background:#5c5c5c"></div><div class="a" style="left:1548.5px;top:303px;width:25.5px;height:28px;background:#4d4d4d;border-radius:3px 0 0 3px"></div><div class="a" style="left:1643px;top:303px;width:25.5px;height:28px;background:#4d4d4d;border-radius:0 3px 3px 0"></div><svg width="122" height="30" viewBox="1547.5 302 122 30" style="left:1547.5px;top:302px"><path d="M1555.55 312.3 l5.7 -5.8 l5.7 5.8" fill="none" stroke="#e8e8e8" stroke-width="1.8"/><path d="M1555.55 320.8 l5.7 5.8 l5.7 -5.8" fill="none" stroke="#e8e8e8" stroke-width="1.8"/><path d="M1649.1 314 l5.5 5.8 l5.5 -5.8" fill="none" stroke="#e8e8e8" stroke-width="1.8"/></svg><div class="t" id="cl0" style="left:1579px;top:308.5px;font-size:15.500px;color:#f0f0f0">65 pt</div><div class="cf" style="left:1729px;top:302px;width:122px;height:30px"></div><div class="a" style="left:1756px;top:303px;width:1px;height:28px;background:#5c5c5c"></div><div class="a" style="left:1823.5px;top:303px;width:1px;height:28px;background:#5c5c5c"></div><div class="a" style="left:1730px;top:303px;width:26px;height:28px;background:#4d4d4d;border-radius:3px 0 0 3px"></div><div class="a" style="left:1824.5px;top:303px;width:25.5px;height:28px;background:#4d4d4d;border-radius:0 3px 3px 0"></div><svg width="122" height="30" viewBox="1729 302 122 30" style="left:1729px;top:302px"><path d="M1737.3 312.3 l5.7 -5.8 l5.7 5.8" fill="none" stroke="#e8e8e8" stroke-width="1.8"/><path d="M1737.3 320.8 l5.7 5.8 l5.7 -5.8" fill="none" stroke="#e8e8e8" stroke-width="1.8"/><path d="M1830.6 314 l5.5 5.8 l5.5 -5.8" fill="none" stroke="#e8e8e8" stroke-width="1.8"/></svg><div class="t" id="cr0" style="left:1761px;top:308.5px;font-size:15.500px;color:#f0f0f0">(78 pt)</div><div class="cf" style="left:1547.5px;top:340.5px;width:122px;height:30px"></div><div class="a" style="left:1574px;top:341.5px;width:1px;height:28px;background:#5c5c5c"></div><div class="a" style="left:1642px;top:341.5px;width:1px;height:28px;background:#5c5c5c"></div><div class="a" style="left:1548.5px;top:341.5px;width:25.5px;height:28px;background:#4d4d4d;border-radius:3px 0 0 3px"></div><div class="a" style="left:1643px;top:341.5px;width:25.5px;height:28px;background:#4d4d4d;border-radius:0 3px 3px 0"></div><svg width="122" height="30" viewBox="1547.5 340.5 122 30" style="left:1547.5px;top:340.5px"><path d="M1555.55 350.8 l5.7 -5.8 l5.7 5.8" fill="none" stroke="#e8e8e8" stroke-width="1.8"/><path d="M1555.55 359.3 l5.7 5.8 l5.7 -5.8" fill="none" stroke="#e8e8e8" stroke-width="1.8"/><path d="M1649.1 352.5 l5.5 5.8 l5.5 -5.8" fill="none" stroke="#e8e8e8" stroke-width="1.8"/></svg><div class="t" id="cl1" style="left:1579px;top:347.0px;font-size:15.500px;color:#f0f0f0;transform:scaleX(0.9376);transform-origin:0 0">Auto</div><div class="cf" style="left:1729px;top:340.5px;width:122px;height:30px"></div><div class="a" style="left:1756px;top:341.5px;width:1px;height:28px;background:#5c5c5c"></div><div class="a" style="left:1823.5px;top:341.5px;width:1px;height:28px;background:#5c5c5c"></div><div class="a" style="left:1730px;top:341.5px;width:26px;height:28px;background:#4d4d4d;border-radius:3px 0 0 3px"></div><div class="a" style="left:1824.5px;top:341.5px;width:25.5px;height:28px;background:#4d4d4d;border-radius:0 3px 3px 0"></div><svg width="122" height="30" viewBox="1729 340.5 122 30" style="left:1729px;top:340.5px"><path d="M1737.3 350.8 l5.7 -5.8 l5.7 5.8" fill="none" stroke="#e8e8e8" stroke-width="1.8"/><path d="M1737.3 359.3 l5.7 5.8 l5.7 -5.8" fill="none" stroke="#e8e8e8" stroke-width="1.8"/><path d="M1830.6 352.5 l5.5 5.8 l5.5 -5.8" fill="none" stroke="#e8e8e8" stroke-width="1.8"/></svg><div class="t" id="cr1" style="left:1761px;top:347.0px;font-size:15.500px;color:#f0f0f0">0</div><div class="cf" style="left:1547.5px;top:390px;width:122px;height:30px"></div><div class="a" style="left:1574px;top:391px;width:1px;height:28px;background:#5c5c5c"></div><div class="a" style="left:1642px;top:391px;width:1px;height:28px;background:#5c5c5c"></div><div class="a" style="left:1548.5px;top:391px;width:25.5px;height:28px;background:#4d4d4d;border-radius:3px 0 0 3px"></div><div class="a" style="left:1643px;top:391px;width:25.5px;height:28px;background:#4d4d4d;border-radius:0 3px 3px 0"></div><svg width="122" height="30" viewBox="1547.5 390 122 30" style="left:1547.5px;top:390px"><path d="M1555.55 400.3 l5.7 -5.8 l5.7 5.8" fill="none" stroke="#e8e8e8" stroke-width="1.8"/><path d="M1555.55 408.8 l5.7 5.8 l5.7 -5.8" fill="none" stroke="#e8e8e8" stroke-width="1.8"/><path d="M1649.1 402 l5.5 5.8 l5.5 -5.8" fill="none" stroke="#e8e8e8" stroke-width="1.8"/></svg><div class="t" id="cl2" style="left:1579px;top:396.5px;font-size:15.500px;color:#f0f0f0;transform:scaleX(0.9582);transform-origin:0 0">100%</div><div class="cf" style="left:1729px;top:390px;width:122px;height:30px"></div><div class="a" style="left:1756px;top:391px;width:1px;height:28px;background:#5c5c5c"></div><div class="a" style="left:1823.5px;top:391px;width:1px;height:28px;background:#5c5c5c"></div><div class="a" style="left:1730px;top:391px;width:26px;height:28px;background:#4d4d4d;border-radius:3px 0 0 3px"></div><div class="a" style="left:1824.5px;top:391px;width:25.5px;height:28px;background:#4d4d4d;border-radius:0 3px 3px 0"></div><svg width="122" height="30" viewBox="1729 390 122 30" style="left:1729px;top:390px"><path d="M1737.3 400.3 l5.7 -5.8 l5.7 5.8" fill="none" stroke="#e8e8e8" stroke-width="1.8"/><path d="M1737.3 408.8 l5.7 5.8 l5.7 -5.8" fill="none" stroke="#e8e8e8" stroke-width="1.8"/><path d="M1830.6 402 l5.5 5.8 l5.5 -5.8" fill="none" stroke="#e8e8e8" stroke-width="1.8"/></svg><div class="t" id="cr2" style="left:1761px;top:396.5px;font-size:15.500px;color:#f0f0f0;transform:scaleX(0.9582);transform-origin:0 0">100%</div><div class="cf" style="left:1547.5px;top:429px;width:122px;height:30px"></div><div class="a" style="left:1574px;top:430px;width:1px;height:28px;background:#5c5c5c"></div><div class="a" style="left:1642px;top:430px;width:1px;height:28px;background:#5c5c5c"></div><div class="a" style="left:1548.5px;top:430px;width:25.5px;height:28px;background:#4d4d4d;border-radius:3px 0 0 3px"></div><div class="a" style="left:1643px;top:430px;width:25.5px;height:28px;background:#4d4d4d;border-radius:0 3px 3px 0"></div><svg width="122" height="30" viewBox="1547.5 429 122 30" style="left:1547.5px;top:429px"><path d="M1555.55 439.3 l5.7 -5.8 l5.7 5.8" fill="none" stroke="#e8e8e8" stroke-width="1.8"/><path d="M1555.55 447.8 l5.7 5.8 l5.7 -5.8" fill="none" stroke="#e8e8e8" stroke-width="1.8"/><path d="M1649.1 441 l5.5 5.8 l5.5 -5.8" fill="none" stroke="#e8e8e8" stroke-width="1.8"/></svg><div class="t" id="cl3" style="left:1579px;top:435.5px;font-size:15.500px;color:#f0f0f0">0 pt</div><div class="cf" style="left:1729px;top:429px;width:122px;height:30px"></div><div class="a" style="left:1756px;top:430px;width:1px;height:28px;background:#5c5c5c"></div><div class="a" style="left:1823.5px;top:430px;width:1px;height:28px;background:#5c5c5c"></div><div class="a" style="left:1730px;top:430px;width:26px;height:28px;background:#4d4d4d;border-radius:3px 0 0 3px"></div><div class="a" style="left:1824.5px;top:430px;width:25.5px;height:28px;background:#4d4d4d;border-radius:0 3px 3px 0"></div><svg width="122" height="30" viewBox="1729 429 122 30" style="left:1729px;top:429px"><path d="M1737.3 439.3 l5.7 -5.8 l5.7 5.8" fill="none" stroke="#e8e8e8" stroke-width="1.8"/><path d="M1737.3 447.8 l5.7 5.8 l5.7 -5.8" fill="none" stroke="#e8e8e8" stroke-width="1.8"/><path d="M1830.6 441 l5.5 5.8 l5.5 -5.8" fill="none" stroke="#e8e8e8" stroke-width="1.8"/></svg><div class="t" id="cr3" style="left:1761px;top:435.5px;font-size:15.500px;color:#f0f0f0">0°</div>



<div class="cf" style="left:1516px;top:518px;width:127px;height:30px"></div>
<div class="t" id="eng" style="left:1526px;top:526px;font-size:15.500px;color:#f2f2f2;transform:scaleX(0.9198);transform-origin:0 0">English: USA</div>
<div class="cf" style="left:1724.500px;top:518px;width:127px;height:30px"></div>
<div class="t" id="shp" style="left:1734px;top:526px;font-size:15.500px;color:#f2f2f2;transform:scaleX(0.9402);transform-origin:0 0">Sharp</div>
<svg width="340" height="30" viewBox="1516 518 340 30" style="left:1516px;top:518px"><path d="M1623 530.5 l5.5 5.8 l5.5 -5.8" fill="none" stroke="#e8e8e8" stroke-width="1.8"/><path d="M1831.7 530.5 l5.5 5.8 l5.5 -5.8" fill="none" stroke="#e8e8e8" stroke-width="1.8"/></svg>
<div class="t" id="stg" style="left:1515.500px;top:577px;font-size:16px;color:#a9a9a9;transform:scaleX(0.9141);transform-origin:0 0">Snap to Glyph</div>
<svg width="24" height="24" viewBox="0 0 24 24" style="left:1622px;top:573px"><circle cx="11.800" cy="12" r="10" fill="none" stroke="#c4c4c4" stroke-width="1.300"/><circle cx="11.800" cy="7" r="1.300" fill="#c4c4c4"/><path d="M9.800 10.200 H12.800 V16.300 H14.300 V17.500 H9.500 V16.300 H10.900 V11.400 H9.800Z" fill="#c4c4c4"/></svg>
<div class="a sb" style="left:1517px"></div><div class="a sb" style="left:1573px"></div><div class="a sb" style="left:1628.500px"></div><div class="a sb" style="left:1759px"></div><div class="a sb" style="left:1814.500px"></div>
<style>.sb{top:612px;width:35.500px;height:35px;border-radius:3px;background:#2f2f2f}</style>
<div class="a" style="left:1739px;top:610px;width:1px;height:38px;background:#484848"></div>
<svg width="352" height="500" viewBox="1508 160 352 500" style="left:1508px;top:160px">
<g fill="#c4c4c4" stroke="#c4c4c4" stroke-width="0.500" font-family="Liberation Serif,serif">
<text x="1516" y="326.600" font-size="14.500" font-weight="700">T</text>
<text x="1522.600" y="326.600" font-size="30" font-weight="700">T</text>
<text x="1523.800" y="413.300" font-size="29.500">T</text>
<text x="1699.600" y="408" font-size="23.500" font-weight="700" textLength="20.500" lengthAdjust="spacingAndGlyphs">T</text>
<text x="1704.600" y="450.300" font-size="18" font-weight="700">T</text>
<text x="1522.400" y="496.400" font-size="22.300">TT</text>
<text x="1568" y="496.400" font-size="22.300">T</text><text x="1581.600" y="496.400" font-size="16.500">T</text>
<text x="1652.600" y="496.400" font-size="22.300">T</text><text x="1668.500" y="486.300" font-size="9" font-weight="700">1</text>
<text x="1695.400" y="496.400" font-size="22.300">T</text><text x="1710.500" y="498.200" font-size="9" font-weight="700">1</text>
<text x="1783.200" y="496.400" font-size="22.300">T</text>
<text x="1827.500" y="496.400" font-size="22.300">T</text>
</g>
<path d="M1782.300 499 H1797.500 M1826.700 488.600 H1841.600" stroke="#c4c4c4" stroke-width="1.500"/>
<g fill="#c4c4c4" font-family="Liberation Sans,sans-serif">
<text x="1706.800" y="313.500" font-size="14.500">A</text><text x="1706.800" y="327.300" font-size="13.500">A</text>
<text x="1516" y="360.300" font-size="19" textLength="26.500" lengthAdjust="spacingAndGlyphs">V/A</text>
<text x="1516.600" y="448.200" font-size="18">A</text><text x="1531.500" y="443.200" font-size="14.500">a</text>
<text x="1693.500" y="533.200" font-size="13.500" fill="#9c9c9c">a</text><text x="1703.800" y="541.700" font-size="19">a</text>
</g>
<path d="M1706 314.900 H1722.500 M1706 328.500 H1722.500" stroke="#c4c4c4" stroke-width="1"/>
<path d="M1702 315 V327.500 M1699.200 317.800 L1702 314.600 L1704.800 317.800 M1699.200 324.800 L1702 328 L1704.800 324.800" fill="none" stroke="#c4c4c4" stroke-width="1.300"/>
<path d="M1531.500 365.500 H1541.500 M1534.500 362.300 L1531 365.500 L1534.500 368.700" fill="none" stroke="#c4c4c4" stroke-width="1.500"/>
<rect x="1697" y="344" width="27" height="15.500" fill="#c4c4c4"/>
<text x="1698.300" y="358" font-family="Liberation Sans,sans-serif" font-size="16.500" fill="#3c3c3c" textLength="24.500" lengthAdjust="spacingAndGlyphs">VA</text>
<path d="M1698.500 365.200 H1722.500 M1701.500 362 L1698 365.200 L1701.500 368.400 M1719.500 362 L1723 365.200 L1719.500 368.400" fill="none" stroke="#c4c4c4" stroke-width="1.500"/>
<path d="M1519.300 395.500 V412.800 M1516.300 398.300 L1519.300 394.800 L1522.300 398.300 M1516.300 410 L1519.300 413.500 L1522.300 410" fill="none" stroke="#c4c4c4" stroke-width="1.500"/>
<path d="M1699 414.300 H1721.500 M1702 411.100 L1698.500 414.300 L1702 417.500 M1718.500 411.100 L1722 414.300 L1718.500 417.500" fill="none" stroke="#c4c4c4" stroke-width="1.500"/>
<path d="M1517 450.400 H1531 M1531.500 445.200 H1539.500" stroke="#c4c4c4" stroke-width="1.100"/>
<path d="M1536 449 V456 M1533 451.300 L1536 448 L1539 451.300" fill="none" stroke="#c4c4c4" stroke-width="1.400"/>
<path d="M1712.500 432.600 A11.600 11.600 0 1 1 1704 434.500" fill="none" stroke="#c4c4c4" stroke-width="1.300"/>
<path d="M1710.500 429.600 L1715.500 432.800 L1710.800 436.500Z" fill="#c4c4c4"/>
<g fill="#fff" font-family="Liberation Sans,sans-serif">
<text x="1522.800" y="636" font-size="20" textLength="24.800" lengthAdjust="spacingAndGlyphs">Ax</text>
<text x="1577.500" y="636" font-size="20" textLength="25" lengthAdjust="spacingAndGlyphs">Ax</text>
<text x="1634.800" y="634.200" font-size="20" textLength="24" lengthAdjust="spacingAndGlyphs">Ag</text>
<text x="1767" y="636.500" font-size="20">A</text>
<text x="1823.300" y="636" font-size="20" textLength="15" lengthAdjust="spacingAndGlyphs">A</text>
</g>
<text x="1691" y="634.200" font-family="Liberation Sans,sans-serif" font-size="20" fill="#9a9a9a" textLength="23.500" lengthAdjust="spacingAndGlyphs">Ag</text>
<path d="M1522.400 637.500 H1549 M1576.800 625.800 H1604" stroke="#fff" stroke-width="1.300"/>
<rect x="1633.400" y="618" width="26.300" height="24.400" fill="none" stroke="#fff" stroke-width="1.300"/>
<path d="M1688.200 625.800 H1715 M1688.200 637.500 H1715" stroke="#9a9a9a" stroke-width="1.300"/>
<path d="M1776.300 618 L1786.800 640.800" stroke="#fff" stroke-width="1.400"/>
<rect x="1832.300" y="620" width="4" height="4.200" fill="#2f2f2f" stroke="#fff" stroke-width="1.100"/>
</svg>


<div class="a" style="left:1858.500px;top:145px;width:2.500px;height:935px;background:#363636"></div>
<div class="a" style="left:1861px;top:143px;width:58px;height:937px;background:#535353;border-radius:3px 0 0 0"></div>
<div class="a" style="left:1861px;top:143px;width:58px;height:17px;background:#434343;border-radius:3px 0 0 0"></div>
<div class="a" style="left:1861px;top:159.500px;width:58px;height:1.500px;background:#333"></div>
<div class="a" style="left:1919px;top:143px;width:1px;height:937px;background:#474747"></div>
<div class="a" style="left:1876px;top:166.5px;width:29px;height:5.500px;background:repeating-linear-gradient(90deg,#3a3a3a 0 1px,transparent 1px 3px)"></div><div class="a" style="left:1861px;top:389.5px;width:58px;height:2px;background:#3c3c3c"></div><div class="a" style="left:1876px;top:396.5px;width:29px;height:5.500px;background:repeating-linear-gradient(90deg,#3a3a3a 0 1px,transparent 1px 3px)"></div><div class="a" style="left:1861px;top:450.5px;width:58px;height:2px;background:#383838"></div><div class="a" style="left:1876px;top:457px;width:29px;height:5.500px;background:repeating-linear-gradient(90deg,#3a3a3a 0 1px,transparent 1px 3px)"></div><div class="a" style="left:1861px;top:512px;width:58px;height:2px;background:#383838"></div><div class="a" style="left:1876px;top:519px;width:29px;height:5.500px;background:repeating-linear-gradient(90deg,#3a3a3a 0 1px,transparent 1px 3px)"></div><div class="a" style="left:1861px;top:783.5px;width:58px;height:2px;background:#383838"></div><div class="a" style="left:1876px;top:790.5px;width:29px;height:5.500px;background:repeating-linear-gradient(90deg,#3a3a3a 0 1px,transparent 1px 3px)"></div><div class="a" style="left:1861px;top:845px;width:58px;height:2px;background:#383838"></div><div class="a" style="left:1876px;top:852px;width:29px;height:5.500px;background:repeating-linear-gradient(90deg,#3a3a3a 0 1px,transparent 1px 3px)"></div><div class="a" style="left:1861px;top:906.5px;width:58px;height:2px;background:#383838"></div><div class="a" style="left:1876px;top:913.5px;width:29px;height:5.500px;background:repeating-linear-gradient(90deg,#3a3a3a 0 1px,transparent 1px 3px)"></div><div class="a" style="left:1861px;top:968px;width:58px;height:2px;background:#383838"></div><div class="a" style="left:1876px;top:975.5px;width:29px;height:5.500px;background:repeating-linear-gradient(90deg,#3a3a3a 0 1px,transparent 1px 3px)"></div><div class="a" style="left:1861px;top:1029.5px;width:58px;height:2px;background:#383838"></div>
<div class="a" style="left:1869px;top:178.500px;width:43px;height:35px;border-radius:4px;background:#383838;border:1px solid #5e5e5e"></div>
<svg width="58" height="935" viewBox="1862 145 58 935" style="left:1862px;top:145px">
<path d="M1904 149.200 L1900.800 152 L1904 154.800 M1909.200 149.200 L1906 152 L1909.200 154.800" fill="none" stroke="#d8d8d8" stroke-width="1.300"/>
<text x="1880.600" y="206.400" font-family="Liberation Sans,sans-serif" font-size="27" fill="#d6d6d6" stroke="#d6d6d6" stroke-width="0.700" textLength="19.400" lengthAdjust="spacingAndGlyphs">A</text>
<path d="M1902.900 183.200 V210" stroke="#b8b8b8" stroke-width="2"/>
<!-- pilcrow -->
<path d="M1889.500 229.500 H1899.800 V231.300 H1898.800 V251.400 H1897.300 V231.300 H1895.600 V251.400 H1892.800 V242.700 H1889.500 a6.600 6.600 0 0 1 0 -13.200Z" fill="#c4c4c4"/>
<!-- O -->
<text x="1880.300" y="293.500" font-family="Liberation Serif,serif" font-style="italic" font-weight="700" font-size="35" fill="#bdbdbd" textLength="22.500" lengthAdjust="spacingAndGlyphs">O</text>
<!-- script A -->
<text x="1880" y="334" font-family="Liberation Serif,serif" font-style="italic" font-size="34" fill="#c4c4c4" textLength="23" lengthAdjust="spacingAndGlyphs">A</text>
<path d="M1881.500 321.500 C1881.500 316.500 1886 313.800 1893 313.300" fill="none" stroke="#c4c4c4" stroke-width="1.500"/>
<!-- palette -->
<path d="M1893.500 353.800 C1902 353.500 1908 358.500 1907.500 365 C1907 369.500 1903 370 1900.500 369.500 C1898 369 1896 370 1897 372 C1898 374.500 1896 375.500 1892.500 375.300 C1884 375 1877.500 370.500 1878 364.500 C1878.500 358.500 1885 354 1893.500 353.800Z" fill="#c4c4c4"/>
<g fill="#535353"><circle cx="1883.800" cy="367" r="2.300"/><circle cx="1890.500" cy="370.800" r="2.100"/><circle cx="1897.500" cy="366.800" r="1.700"/><circle cx="1901.500" cy="362.500" r="1.600"/><circle cx="1898.500" cy="358.300" r="1.500"/></g>
<!-- color guide -->
<defs><linearGradient id="cg" x1="0" y1="0" x2="1" y2="1"><stop offset="0" stop-color="#111"/><stop offset=".45" stop-color="#555"/><stop offset="1" stop-color="#e4e4e4"/></linearGradient>
<linearGradient id="dg" x1="0" y1="0" x2="1" y2="0"><stop offset="0" stop-color="#3a3a3a"/><stop offset="1" stop-color="#d8d8d8"/></linearGradient></defs>
<path d="M1881.500 415 C1893 416 1902 425 1904.300 437.200 H1881.500Z" fill="url(#cg)" stroke="#c4c4c4" stroke-width="1.300" stroke-linejoin="round"/>
<path d="M1881.500 437 L1886 416.500 M1881.500 437 L1892 420 M1881.500 437 L1897.500 425 M1881.500 437 L1902 431" stroke="#999" stroke-width="0.700" opacity=".6"/>
<!-- swatches -->
<rect x="1879.800" y="480.300" width="24" height="16.600" rx="1" fill="#7a7a7a" stroke="#c4c4c4" stroke-width="1.200"/>
<path d="M1887.800 480.300 V497 M1895.800 480.300 V497 M1879.800 488.600 H1903.800" stroke="#c4c4c4" stroke-width="1.200"/>
<rect x="1888.400" y="481" width="6.800" height="7" fill="#a8a8a8"/><rect x="1896.400" y="481" width="6.800" height="7" fill="#5e5e5e"/><rect x="1896.400" y="489.200" width="6.800" height="7" fill="#8e8e8e"/><rect x="1880.400" y="489.200" width="6.800" height="7" fill="#6a6a6a"/>
<!-- brushes -->
<path d="M1886 550.500 H1899.500 V561.500 q0 1.800 -1.800 1.800 H1887.800 q-1.800 0 -1.800 -1.800Z" fill="#c4c4c4"/>
<path d="M1890.500 550 L1889.500 540 H1888 V534.500 H1893 V540 H1891.800 L1892.500 550Z M1886.500 550 C1882.500 548 1880 544.500 1882 540 C1885 543 1887.500 546 1888.500 550Z M1894.500 550 L1898 543 C1896 541 1899 539 1902 540 C1905 541 1905.800 544 1905 546 C1903 544.500 1901 544 1899.500 544.500 L1896.500 550Z" fill="#c4c4c4"/>
<!-- gradient -->
<rect x="1879.800" y="582.200" width="25" height="16.800" rx="1" fill="url(#dg)" stroke="#c4c4c4" stroke-width="1.300"/>
<!-- transform -->
<rect x="1883.200" y="624" width="18.400" height="18.500" fill="none" stroke="#c4c4c4" stroke-width="1.500"/>
<g fill="#c4c4c4"><rect x="1881.300" y="622" width="4" height="4"/><rect x="1899.400" y="622" width="4" height="4"/><rect x="1881.300" y="640.500" width="4" height="4"/><rect x="1899.400" y="640.500" width="4" height="4"/><rect x="1890.300" y="622" width="4" height="3.400"/><rect x="1890.300" y="641" width="4" height="3.500"/><rect x="1881.300" y="631.300" width="3.400" height="4"/><rect x="1900" y="631.300" width="3.400" height="4"/><circle cx="1892.400" cy="633.300" r="1.400"/></g>
<!-- 3d -->
<g fill="none" stroke="#c4c4c4" stroke-width="1.300" stroke-linejoin="round"><path d="M1887.500 662 L1895 665.500 V673.500 L1887.500 677.500 L1880.300 673.500 V665.500Z M1880.300 665.500 L1887.500 669.300 L1895 665.500 M1887.500 669.300 V677.500"/></g>
<g fill="#c4c4c4"><rect x="1899.300" y="663.500" width="5.700" height="5.500"/><rect x="1899.300" y="672" width="5.700" height="5.500"/><rect x="1879.800" y="682.500" width="25.400" height="5.800"/></g>
<path d="M1898.800 684.300 H1903.300 L1901 687Z" fill="#3c3c3c"/>
<!-- align -->
<path d="M1881.900 704 V730.600" stroke="#c4c4c4" stroke-width="1.400"/>
<rect x="1884.400" y="707.500" width="11.300" height="9.200" fill="#c4c4c4"/><rect x="1884.400" y="719.600" width="19" height="7.400" fill="#c4c4c4"/>
<!-- pathfinder -->
<rect x="1881.300" y="748.400" width="13.600" height="13.400" fill="#c4c4c4"/><rect x="1889.800" y="757" width="13.600" height="13.300" fill="#c4c4c4"/><rect x="1889.800" y="757" width="5.100" height="4.800" fill="#7e7e7e" stroke="#c4c4c4" stroke-width="1.100"/>
<!-- club -->
<circle cx="1892.400" cy="814" r="6.200" fill="#c4c4c4"/><circle cx="1885.900" cy="821.800" r="6" fill="#c4c4c4"/><circle cx="1898.900" cy="821.800" r="6" fill="#c4c4c4"/>
<path d="M1890.500 820 H1894.300 C1894.300 826 1895 829.500 1901 831.800 H1883.800 C1889.800 829.500 1890.500 826 1890.500 820Z" fill="#c4c4c4"/>
<!-- stroke -->
<g fill="#c4c4c4"><rect x="1879.600" y="872.600" width="25.600" height="1.400"/><rect x="1879.600" y="878.300" width="25.600" height="3.300"/><rect x="1879.600" y="886.200" width="25.600" height="4.600"/></g>
<!-- appearance -->
<rect x="1885.300" y="933.800" width="19.500" height="19.500" fill="none" stroke="#c4c4c4" stroke-width="1.400"/>
<rect x="1879.800" y="945.300" width="9" height="8.500" fill="#6e6e6e" stroke="#c4c4c4" stroke-width="1.200"/><rect x="1884" y="949.300" width="7.500" height="7.500" fill="#535353" stroke="#c4c4c4" stroke-width="1.200"/>
<!-- layers -->
<path d="M1892.400 992.500 L1905.300 1000.300 L1892.400 1008.200 L1879.600 1000.300Z" fill="#c4c4c4"/>
<path d="M1879.800 1007.600 L1883.600 1005.300 L1892.400 1010.700 L1901.200 1005.300 L1905 1007.600 L1892.400 1015.400Z" fill="#c4c4c4" transform="translate(0,2.200)"/>
</svg>


<div class="a" style="left:0;top:1055px;width:1860px;height:25px;background:#535353"></div>
<div class="a" style="left:648px;top:1055px;width:1186px;height:25px;background:#4a4a4a"></div>
<div class="a" style="left:7px;top:1057px;width:102px;height:24px;background:#484848;border:1px solid #5c5c5c;border-radius:4px 4px 0 0"></div>
<div class="a" style="left:82px;top:1058px;width:1px;height:22px;background:#5c5c5c"></div>
<div class="a" style="left:172px;top:1057px;width:87px;height:24px;background:#484848;border:1px solid #5c5c5c;border-radius:4px 4px 0 0"></div>
<div class="a" style="left:231.500px;top:1058px;width:1px;height:22px;background:#5c5c5c"></div>
<div class="a" style="left:110px;top:1057px;width:61px;height:24px;border:1px solid #5c5c5c;border-radius:4px 4px 0 0"></div>
<div class="a" style="left:260px;top:1057px;width:62px;height:24px;border:1px solid #5c5c5c;border-radius:4px 4px 0 0"></div>
<div class="a" style="left:322.500px;top:1057px;width:299px;height:24px;border:1px solid #5c5c5c;border-radius:4px 4px 0 0"></div>
<div class="a" style="left:622px;top:1057px;width:26px;height:24px;border:1px solid #5c5c5c;border-radius:4px 4px 0 0"></div>
<div class="t" id="z50" style="left:11px;top:1062px;font-size:15.500px;color:#f0f0f0">50%</div>
<div class="t" style="left:176.500px;top:1062px;font-size:15.500px;color:#f0f0f0">1</div>
<div class="t" id="sel" style="left:442px;top:1062px;font-size:15.500px;color:#c6c6c6;transform:scaleX(0.9268);transform-origin:0 0">Selection</div>
<svg width="1860" height="25" viewBox="0 1055 1860 25" style="left:0;top:1055px">
<path d="M89.500 1067.500 l5.500 5.500 l5.500 -5.500 M239 1067.500 l5.800 5.500 l5.800 -5.500" fill="none" stroke="#e8e8e8" stroke-width="1.800"/>
<g fill="#727272"><rect x="122.300" y="1063" width="2.200" height="12.500"/><path d="M134.800 1063 V1075.500 L125.800 1069.200Z"/><path d="M158.600 1063 V1075.500 L149.600 1069.200Z"/><path d="M273.500 1063 V1075.500 L282.500 1069.200Z"/><path d="M297 1063 V1075.500 L306 1069.200Z"/><rect x="307.300" y="1063" width="2.200" height="12.500"/></g>
<path d="M632.500 1062.500 V1076 L641.800 1069.200Z" fill="#d8d8d8"/>
<path d="M665 1063 L659 1068.700 L665 1074.400" fill="none" stroke="#c8c8c8" stroke-width="1.600"/>
<path d="M1819 1063 L1825 1068.700 L1819 1074.400" fill="none" stroke="#c8c8c8" stroke-width="1.600"/>
<rect x="1223.400" y="1057" width="37.600" height="21.500" rx="10.700" fill="#606060"/>
<path d="M1840.700 1040 L1846.300 1045.300 L1851.900 1040" fill="none" stroke="#c8c8c8" stroke-width="1.600"/>
</svg>

<div class="a" style="left:0;top:1079px;width:1860px;height:1px;background:#404040"></div>
</body></html>
